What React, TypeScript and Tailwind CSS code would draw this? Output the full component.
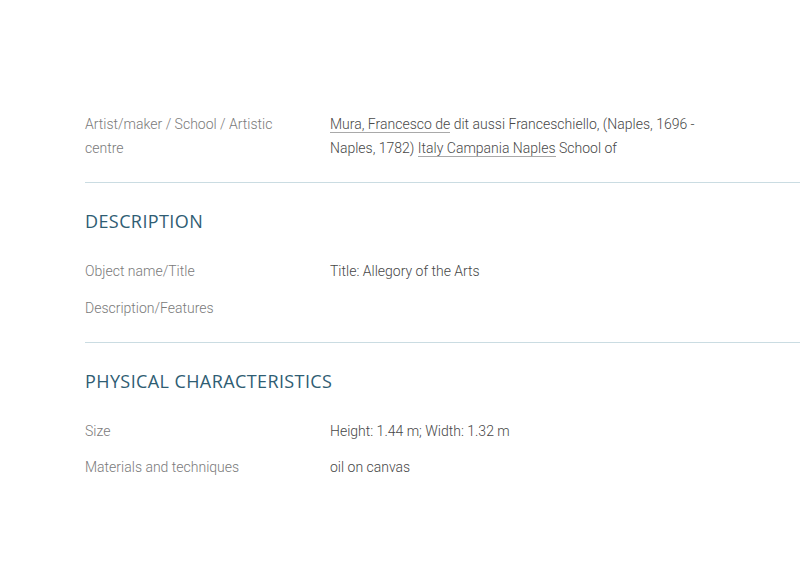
import React from "react";

type Row = { label: React.ReactNode; value?: React.ReactNode };

const Link = ({ children }: { children: React.ReactNode }) => (
  <a className="border-b border-[#a9a9a9] text-[#4a4a4a]">{children}</a>
);

const Rows = ({ rows, gap }: { rows: Row[]; gap: string }) => (
  <div className={`flex flex-col ${gap}`}>
    {rows.map((r, i) => (
      <div key={i} className="flex text-[14px] leading-6 font-light">
        <div className="w-[245px] shrink-0 pr-[50px] text-[#7a7a7a]">{r.label}</div>
        <div className="w-[380px] text-[#474747]">{r.value}</div>
      </div>
    ))}
  </div>
);

const Heading = ({ children }: { children: React.ReactNode }) => (
  <h2 className="mt-[26px] mb-[26px] text-[18px] leading-6 tracking-[0.4px] text-[#2f5d73] font-['Open_Sans',sans-serif] font-normal">
    {children}
  </h2>
);

const App: React.FC = () => {
  return (
    <div className="min-h-[561px] bg-white pl-[85px] pt-[112px] font-['Roboto',sans-serif]">
      <div className="pb-[22px]">
        <Rows
          gap="gap-[13px]"
          rows={[
            {
              label: "Artist/maker / School / Artistic centre",
              value: (
                <>
                  <Link>Mura, Francesco de</Link> dit aussi Franceschiello, (Naples, 1696 - Naples, 1782){" "}
                  <Link>Italy Campania Naples</Link> School of
                </>
              ),
            },
          ]}
        />
      </div>
      <div className="border-t border-[#cadce2]" />
      <Heading>DESCRIPTION</Heading>
      <div className="pb-[22px]">
        <Rows
          gap="gap-[13px]"
          rows={[
            { label: "Object name/Title", value: "Title: Allegory of the Arts" },
            { label: "Description/Features" },
          ]}
        />
      </div>
      <div className="border-t border-[#cadce2]" />
      <Heading>PHYSICAL CHARACTERISTICS</Heading>
      <Rows
        gap="gap-[12px]"
        rows={[
          { label: "Size", value: "Height: 1.44 m; Width: 1.32 m" },
          { label: "Materials and techniques", value: "oil on canvas" },
        ]}
      />
    </div>
  );
};

export default App;
